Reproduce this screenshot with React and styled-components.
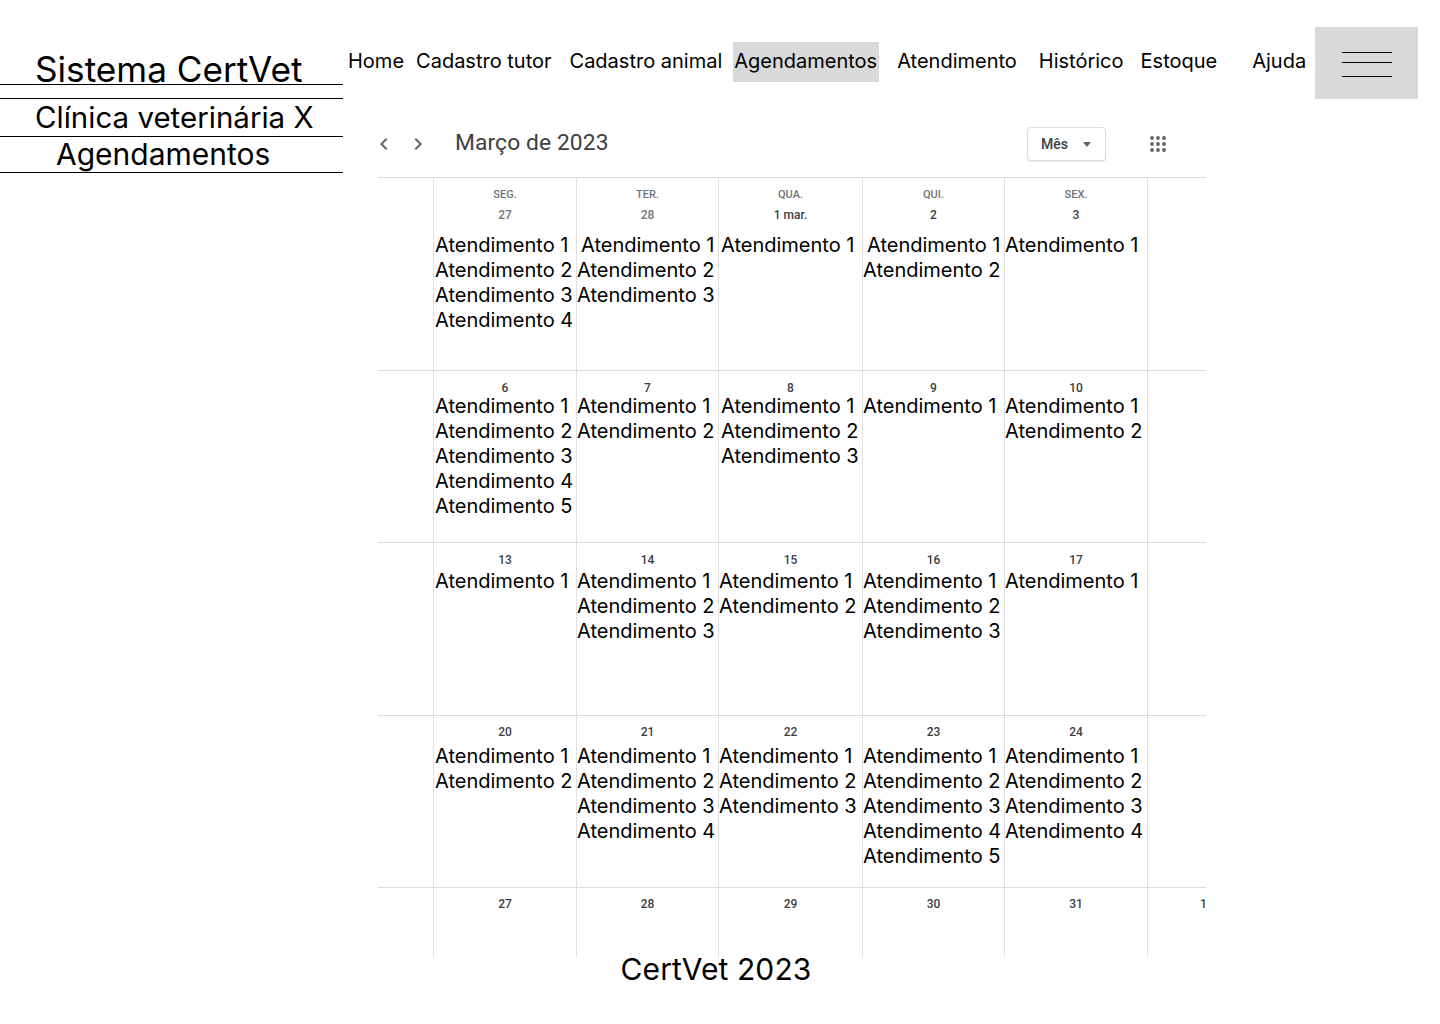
import styled, { createGlobalStyle } from 'styled-components'

const GlobalStyle = createGlobalStyle`
    body {
        margin: 0;
        background: #ffffff;
        font-family: Inter, "Noto Sans", sans-serif;
        color: #000000;
    }
`

const Page = styled.div`
    display: grid;
    grid-template-columns: 343px 1fr;
    width: 1440px;
    min-height: 1024px;
`

const Sidebar = styled.aside`
    display: flex;
    flex-direction: column;
`

const SideTitle = styled.div`
    box-sizing: content-box;
    height: ${({h}) => h}px;
    line-height: ${({h}) => h}px;
    font-size: ${({size}) => size}px;
    padding-left: ${({indent}) => indent}px;
    margin-top: ${({top}) => top || 0}px;
    border-bottom: 1px solid #000;
    ${({lined}) => lined && 'border-top: 1px solid #000;'}
    white-space: nowrap;
`

const Main = styled.main`
    display: flex;
    flex-direction: column;
    padding-left: 5px;
`

const Nav = styled.nav`
    display: flex;
    align-items: flex-start;
    margin-top: 27px;
    height: 72px;
`

const NavItem = styled.a`
    display: flex;
    align-items: center;
    height: 38px;
    margin-top: 15px;
    padding-bottom: 2px;
    margin-left: ${({gap}) => gap || 0}px;
    padding-left: ${({active}) => active ? '1px' : '0'};
    padding-right: ${({active}) => active ? '2px' : '0'};
    font-size: 20px;
    color: #000;
    text-decoration: none;
    white-space: nowrap;
    background: ${({active}) => active ? '#d9d9d9' : 'transparent'};
    cursor: pointer;
`

const MenuButton = styled.button`
    display: flex;
    align-items: flex-start;
    justify-content: center;
    width: 103px;
    height: 72px;
    margin-left: 9px;
    border: 0;
    padding: 25px 0 0;
    background: #d9d9d9;
    cursor: pointer;
`

const Calendar = styled.section`
    width: 828px;
    margin-left: 30px;
    margin-top: 28px;
    font-family: Roboto, Arial, sans-serif;
`

const CalHeader = styled.div`
    display: flex;
    align-items: flex-start;
    height: 50px;
`

const Arrows = styled.div`
    display: flex;
    gap: 10px;
    margin: 5px 0 0 -6px;
`

const MonthTitle = styled.h2`
    margin: 0 0 0 25px;
    font-size: 22.8px;
    font-weight: 400;
    line-height: 32px;
    color: #3c4043;
    letter-spacing: 0.1px;
`

const ViewButton = styled.button`
    display: flex;
    align-items: center;
    gap: 14px;
    margin-left: auto;
    height: 34px;
    width: 79px;
    padding: 0 0 0 13px;
    box-sizing: border-box;
    border: 1px solid #dadce0;
    border-radius: 4px;
    background: #fff;
    box-shadow: 0 1px 1px rgba(60, 64, 67, 0.12);
    font-family: Roboto, Arial, sans-serif;
    font-size: 14px;
    font-weight: 500;
    color: #3c4043;
`

const AppsIcon = styled.div`
    margin: 9px 40px 0 44px;
`

const Grid = styled.div`
    display: grid;
    grid-template-columns: 55px 143px 142px 144px 142px 143px 59px;
    grid-template-rows: 193px 172px 173px 172px 70px;
    overflow: hidden;
`

const Cell = styled.div`
    display: flex;
    flex-direction: column;
    border-top: 1px solid #dadce0;
    ${({edge}) => !edge && 'border-left: 1px solid #e0e0e0;'}
    min-width: 0;
`

const DayName = styled.div`
    margin-top: 10px;
    text-align: center;
    font-size: 11px;
    font-weight: 500;
    line-height: 14px;
    color: #70757a;
`

const DateLabel = styled.div`
    margin-top: ${({top}) => top}px;
    padding-left: ${({shift}) => shift || 0}px;
    text-align: ${({shift}) => shift ? 'left' : 'center'};
    font-size: 12px;
    font-weight: 500;
    line-height: 14px;
    color: ${({muted}) => muted ? '#70757a' : '#3c4043'};
    white-space: nowrap;
`

const Entries = styled.div`
    display: flex;
    flex-direction: column;
    margin-top: ${({top}) => top}px;
`

const Entry = styled.div`
    padding-left: ${({indent}) => indent}px;
    font-family: Inter, "Noto Sans", sans-serif;
    font-size: 20px;
    line-height: 25px;
    color: #000;
    white-space: nowrap;
`

const Footer = styled.footer`
    grid-column: 1 / -1;
    text-align: center;
    padding-right: 8px;
    font-size: 30px;
    line-height: 16px;
    height: 60px;
    letter-spacing: 0.1px;
`

const navItems = [
    { label: 'Home', gap: 0 },
    { label: 'Cadastro tutor', gap: 12 },
    { label: 'Cadastro animal', gap: 18 },
    { label: 'Agendamentos', gap: 11, active: true },
    { label: 'Atendimento', gap: 18 },
    { label: 'Histórico', gap: 22 },
    { label: 'Estoque', gap: 17 },
    { label: 'Ajuda', gap: 35 },
]

const dayNames = ['SEG.', 'TER.', 'QUA.', 'QUI.', 'SEX.']

// per week: offsets of the date and of the appointment list inside a cell
const weeks = [
    {
        dateTop: 6, listTop: 11,
        days: [
            { date: '27', muted: true, pads: [1, 1, 1, 1] },
            { date: '28', muted: true, pads: [4, 0, 0] },
            { date: '1 mar.', pads: [2] },
            { date: '2', pads: [4, 0] },
            { date: '3', pads: [0] },
        ],
    },
    {
        dateTop: 10, listTop: -1,
        days: [
            { date: '6', pads: [1, 1, 1, 1, 1] },
            { date: '7', pads: [0, 0] },
            { date: '8', pads: [2, 2, 2] },
            { date: '9', pads: [0] },
            { date: '10', pads: [0, 0] },
        ],
    },
    {
        dateTop: 10, listTop: 2,
        days: [
            { date: '13', pads: [1] },
            { date: '14', pads: [0, 0, 0] },
            { date: '15', pads: [0, 0] },
            { date: '16', pads: [0, 0, 0] },
            { date: '17', pads: [0] },
        ],
    },
    {
        dateTop: 9, listTop: 5,
        days: [
            { date: '20', pads: [1, 1] },
            { date: '21', pads: [0, 0, 0, 0] },
            { date: '22', pads: [0, 0, 0] },
            { date: '23', pads: [0, 0, 0, 0, 0] },
            { date: '24', pads: [0, 0, 0, 0] },
        ],
    },
    {
        dateTop: 9, listTop: 0,
        days: [
            { date: '27', pads: [] },
            { date: '28', pads: [] },
            { date: '29', pads: [] },
            { date: '30', pads: [] },
            { date: '31', pads: [] },
        ],
    },
]

function Chevron({ dir }) {
    return (
        <svg width="24" height="24" viewBox="0 0 24 24" fill="#5f6368">
            {dir === 'left'
                ? <path d="M15.41 7.41L14 6l-6 6 6 6 1.41-1.41L10.83 12z" />
                : <path d="M8.59 16.59L10 18l6-6-6-6-1.41 1.41L13.17 12z" />}
        </svg>
    )
}

function Apps() {
    const dots = []
    for (let r = 0; r < 3; r++) {
        for (let c = 0; c < 3; c++) {
            dots.push(<circle key={r + '-' + c} cx={2 + c * 6} cy={2 + r * 6} r="1.9" fill="#5f6368" />)
        }
    }
    return <svg width="16" height="16" viewBox="0 0 16 16">{dots}</svg>
}

function Hamburger() {
    return (
        <svg width="50" height="26" viewBox="0 0 50 26" stroke="#000" strokeWidth="1">
            <line x1="0" y1="0.5" x2="50" y2="0.5" />
            <line x1="0" y1="10.5" x2="50" y2="10.5" />
            <line x1="0" y1="24.5" x2="50" y2="24.5" />
        </svg>
    )
}

function DayCell({ day, week, first, dayIndex }) {
    return (
        <Cell>
            {first && <DayName>{dayNames[dayIndex]}</DayName>}
            <DateLabel top={week.dateTop} muted={day.muted}>{day.date}</DateLabel>
            <Entries top={week.listTop}>
                {day.pads.map((pad, i) => (
                    <Entry key={i} indent={pad}>Atendimento {i + 1}</Entry>
                ))}
            </Entries>
        </Cell>
    )
}

function App() {
    return (
        <>
            <GlobalStyle />
            <Page>
                <Sidebar>
                    <SideTitle h={29} size={35.2} indent={35} top={55}>Sistema CertVet</SideTitle>
                    <SideTitle h={37} size={29.5} indent={35} top={13} lined>Clínica veterinária X</SideTitle>
                    <SideTitle h={35} size={30} indent={56}>Agendamentos</SideTitle>
                </Sidebar>
                <Main>
                    <Nav>
                        {navItems.map((item) => (
                            <NavItem key={item.label} gap={item.gap} active={item.active}>{item.label}</NavItem>
                        ))}
                        <MenuButton aria-label="Menu"><Hamburger /></MenuButton>
                    </Nav>
                    <Calendar>
                        <CalHeader>
                            <Arrows>
                                <Chevron dir="left" />
                                <Chevron dir="right" />
                            </Arrows>
                            <MonthTitle>Março de 2023</MonthTitle>
                            <ViewButton>
                                Mês
                                <svg width="10" height="5" viewBox="0 0 10 5"><path d="M1 0h8L5 5z" fill="#5f6368" /></svg>
                            </ViewButton>
                            <AppsIcon><Apps /></AppsIcon>
                        </CalHeader>
                        <Grid>
                            {weeks.map((week, w) => [
                                <Cell key={'s' + w} edge />,
                                ...week.days.map((day, d) => (
                                    <DayCell key={w + '-' + d} day={day} week={week} first={w === 0} dayIndex={d} />
                                )),
                                <Cell key={'e' + w}>
                                    {w === 4 && <DateLabel top={week.dateTop} shift={52}>1</DateLabel>}
                                </Cell>,
                            ])}
                        </Grid>
                    </Calendar>
                </Main>
                <Footer>CertVet 2023</Footer>
            </Page>
        </>
    )
}

export default App
